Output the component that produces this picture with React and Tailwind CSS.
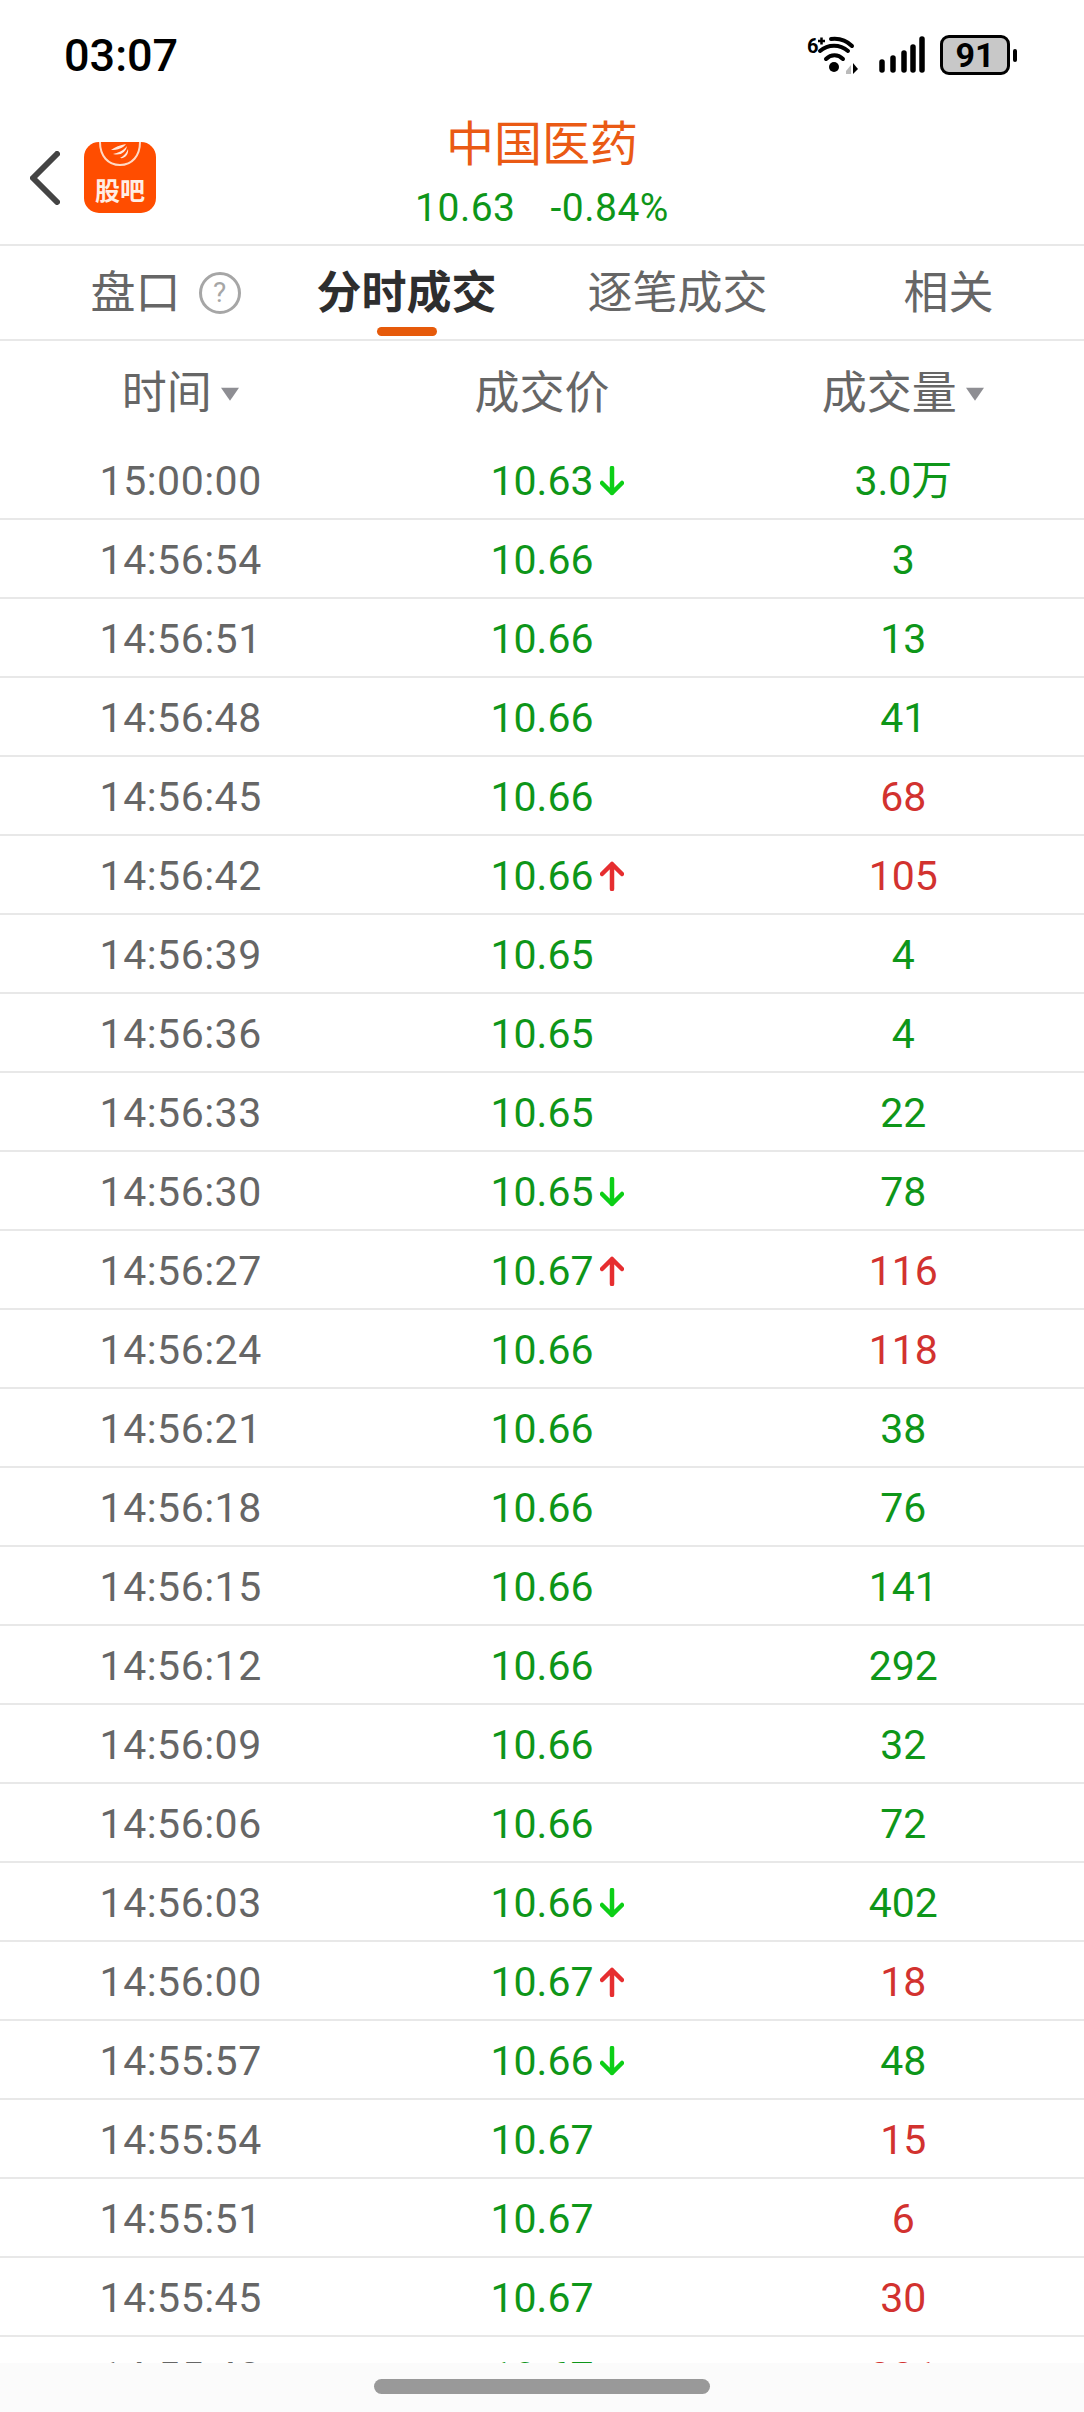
import React from "react";

const GREEN = "text-[#0e9619]";
const RED = "text-[#d2322f]";

const rows = [
  ["15:00:00", "10.63", "down", "3.0万", "g"],
  ["14:56:54", "10.66", "", "3", "g"],
  ["14:56:51", "10.66", "", "13", "g"],
  ["14:56:48", "10.66", "", "41", "g"],
  ["14:56:45", "10.66", "", "68", "r"],
  ["14:56:42", "10.66", "up", "105", "r"],
  ["14:56:39", "10.65", "", "4", "g"],
  ["14:56:36", "10.65", "", "4", "g"],
  ["14:56:33", "10.65", "", "22", "g"],
  ["14:56:30", "10.65", "down", "78", "g"],
  ["14:56:27", "10.67", "up", "116", "r"],
  ["14:56:24", "10.66", "", "118", "r"],
  ["14:56:21", "10.66", "", "38", "g"],
  ["14:56:18", "10.66", "", "76", "g"],
  ["14:56:15", "10.66", "", "141", "g"],
  ["14:56:12", "10.66", "", "292", "g"],
  ["14:56:09", "10.66", "", "32", "g"],
  ["14:56:06", "10.66", "", "72", "g"],
  ["14:56:03", "10.66", "down", "402", "g"],
  ["14:56:00", "10.67", "up", "18", "r"],
  ["14:55:57", "10.66", "down", "48", "g"],
  ["14:55:54", "10.67", "", "15", "r"],
  ["14:55:51", "10.67", "", "6", "r"],
  ["14:55:45", "10.67", "", "30", "r"],
  ["14:55:42", "10.67", "", "331", "r"],
];

const TickArrow = ({ dir }) => (
  <svg
    viewBox="0 0 24 30"
    className={`absolute left-[100%] top-1/2 ml-[7px] h-[30px] w-[24px] -translate-y-1/2 ${dir === "up" ? "text-[#e62e30]" : "text-[#0ccf16]"}`}
    fill="none"
    stroke="currentColor"
    strokeWidth="4.5"
    strokeLinecap="round"
    strokeLinejoin="round"
  >
    {dir === "up" ? <path d="M12 28V3M2 13 12 3l10 10" /> : <path d="M12 2v25M2 17l10 10 10-10" />}
  </svg>
);

const SortCaret = () => (
  <span className="absolute left-[100%] top-1/2 ml-[9px] h-0 w-0 -translate-y-[40%] border-x-[9px] border-t-[13px] border-x-transparent border-t-[#8e8e93]" />
);

const WifiIcon = () => (
  <svg viewBox="0 0 52 42" className="h-[42px] w-[52px]">
    <text x="0" y="19" fontSize="20" fontWeight="700" fontFamily="Roboto, sans-serif" fill="#000">6</text>
    <path d="M11 7h7M14.500 3.500v7" stroke="#000" strokeWidth="2.500" />
    <g fill="none" stroke="#000" strokeWidth="4" strokeLinecap="round">
      <path d="M24 5c8-1 16 2 21 7" />
      <path d="M13 17c8-7 20-7 28 0" />
      <path d="M19 25c5-5 12-5 17 0" />
    </g>
    <circle cx="27" cy="33" r="5" fill="#000" />
    <path d="M39 37l5-6v9h-5z" fill="#bbb" />
    <path d="M46 29v11l5-5z" fill="#000" />
  </svg>
);

const SignalIcon = () => (
  <svg viewBox="0 0 46 38" className="h-[38px] w-[46px]" fill="none" stroke="#000" strokeWidth="5.5" strokeLinecap="round">
    <path d="M3 26v8M14 22v12M25 17v17M43 3v31M34 11v23" />
  </svg>
);

const Battery = () => (
  <div className="flex items-center gap-[3px]">
    <div className="flex h-[40px] w-[70px] items-center justify-center rounded-[9px] border-[3px] border-black bg-[#c8c8c8] text-[34px] font-bold leading-none text-black">
      91
    </div>
    <div className="h-[13px] w-[4px] rounded-full bg-black" />
  </div>
);

const Logo = () => (
  <div className="relative h-[71px] w-[72px] shrink-0 overflow-hidden rounded-[15px] bg-[#ff4d00]">
    <svg viewBox="0 0 72 71" className="absolute left-0 top-0 h-full w-full">
      <path d="M16 0c0 14 8 23 20 23S56 14 56 0" fill="none" stroke="#ffd9c4" strokeWidth="2" />
      <path d="M27 8c4-3 9-5 15-6-3 4-8 6-15 6zM29 12c5-1 10-3 14-8-1 6-6 10-14 8zM36 16c4-2 7-6 8-9 1 5-3 10-8 9z" fill="#ffe6d8" />
    </svg>
    <div className="absolute left-0 right-0 top-[33px] text-center font-['Noto_Sans_CJK_SC',sans-serif] text-[25px] font-bold leading-[28px] text-[#ffeee5]">
      股吧
    </div>
  </div>
);

const App = () => {
  return (
    <div className="flex h-[2412px] w-[1084px] flex-col overflow-hidden bg-white font-['Roboto','Noto_Sans_CJK_SC',sans-serif]">
      {/* status bar */}
      <div className="flex h-[112px] shrink-0 items-start justify-between pl-[64px] pr-[67px] pt-[29px]">
        <span className="text-[45px] font-medium leading-[53px] text-black">03:07</span>
        <div className="mt-[5px] flex items-center gap-[15px]">
          <div className="mr-[5px]"><WifiIcon /></div>
          <SignalIcon />
          <Battery />
        </div>
      </div>

      {/* title */}
      <div className="relative h-[134px] shrink-0 border-b-2 border-[#e8e8e8]">
        <div className="absolute left-[30px] top-[30px] flex items-center gap-[24px]">
          <svg viewBox="0 0 30 54" className="h-[54px] w-[30px]" fill="none" stroke="#444" strokeWidth="6" strokeLinecap="round" strokeLinejoin="round">
            <path d="M27 3 3 27l24 24" />
          </svg>
          <Logo />
        </div>
        <div className="flex flex-col items-center pt-[5px]">
          <div className="text-[48px] leading-[56px] text-[#ea5a14]">中国医药</div>
          <div className={`mt-[12px] flex gap-[35px] text-[39px] leading-[46px] tracking-[0.5px] ${GREEN}`}>
            <span>10.63</span>
            <span>-0.84%</span>
          </div>
        </div>
      </div>

      {/* tabs */}
      <div className="grid h-[95px] shrink-0 grid-cols-4 border-b-2 border-[#e8e8e8] text-[45px] text-[#666]">
        <div className="flex justify-center pt-[22px] leading-[52px]">
          <span className="relative">
            盘口
            <span className="absolute left-[100%] top-[4px] ml-[18px] flex h-[42px] w-[42px] items-center justify-center rounded-full border-[3px] border-[#a6a6a6] text-[28px] leading-none text-[#a6a6a6]">
              ?
            </span>
          </span>
        </div>
        <div className="relative flex justify-center pt-[22px] font-bold leading-[52px] text-[#2e2e2e]">
          分时成交
          <span className="absolute bottom-[3px] left-1/2 h-[9px] w-[60px] -translate-x-1/2 rounded-full bg-[#e65a0a]" />
        </div>
        <div className="flex justify-center pt-[22px] leading-[52px]">逐笔成交</div>
        <div className="flex justify-center pt-[22px] leading-[52px]">相关</div>
      </div>

      {/* table header */}
      <div className="grid h-[100px] shrink-0 grid-cols-3 items-center pt-[5px] text-center text-[45px] leading-[52px] text-[#666]">
        <div><span className="relative -left-[14px]">时间<SortCaret /></span></div>
        <div>成交价</div>
        <div><span className="relative -left-[14px]">成交量<SortCaret /></span></div>
      </div>

      {/* trades */}
      <div className="flex-1 overflow-hidden">
        {rows.map(([time, price, dir, vol, tone]) => (
          <div key={time} className="grid h-[79px] grid-cols-3 items-center border-b-2 border-[#e8e8e8] pt-[3px] text-center text-[41px] leading-[47px]">
            <div className="tracking-[0.5px] text-[#666]">{time}</div>
            <div className={GREEN}>
              <span className="relative">
                {price}
                {dir && <TickArrow dir={dir} />}
              </span>
            </div>
            <div className={tone === "r" ? RED : GREEN}>{vol}</div>
          </div>
        ))}
      </div>

      {/* gesture bar */}
      <div className="flex h-[49px] shrink-0 justify-center bg-[#fbfbfb] pt-[16px]">
        <div className="h-[15px] w-[336px] rounded-full bg-[#999]" />
      </div>
    </div>
  );
};

export default App;
